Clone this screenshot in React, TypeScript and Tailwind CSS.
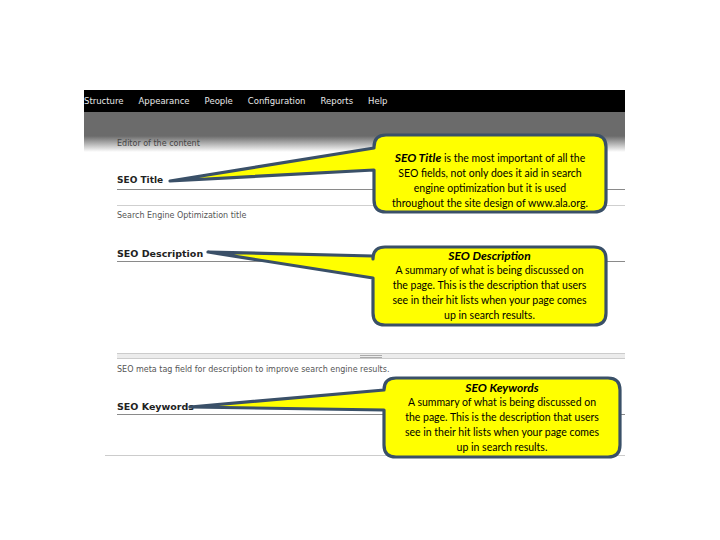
import React from "react";

type Box = { x1: number; y1: number; x2: number; y2: number; r: number; ty1: number; ty2: number; tx: number; ty: number };

const calloutPath = (b: Box) =>
    `M ${b.x1} ${b.ty2} L ${b.tx} ${b.ty} L ${b.x1} ${b.ty1} L ${b.x1} ${b.y1 + b.r} Q ${b.x1} ${b.y1} ${b.x1 + b.r} ${b.y1} ` +
    `L ${b.x2 - b.r} ${b.y1} Q ${b.x2} ${b.y1} ${b.x2} ${b.y1 + b.r} L ${b.x2} ${b.y2 - b.r} Q ${b.x2} ${b.y2} ${b.x2 - b.r} ${b.y2} ` +
    `L ${b.x1 + b.r} ${b.y2} Q ${b.x1} ${b.y2} ${b.x1} ${b.y2 - b.r} Z`;

const callouts: Box[] = [
    { x1: 374, y1: 135, x2: 606, y2: 212, r: 12, ty1: 148, ty2: 170, tx: 170, ty: 181 },
    { x1: 373, y1: 247, x2: 606, y2: 325, r: 12, ty1: 256, ty2: 278, tx: 208, ty: 252 },
    { x1: 384, y1: 378, x2: 620, y2: 457, r: 12, ty1: 390, ty2: 410, tx: 190, ty: 407 },
];

const navItems = ["Structure", "Appearance", "People", "Configuration", "Reports", "Help"];

const App: React.FC = () => {
    return (
        <div className="relative w-[720px] h-[540px] bg-white overflow-hidden">
            <div className="ml-[84px] pt-[90px] w-[541px]">
                {/* admin menu */}
                <div className="h-[22px] bg-black flex items-center gap-[15px] text-[#e8e8e8] text-[8.5px] font-['DejaVu_Sans',sans-serif]">
                    {navItems.map((n) => (
                        <span key={n}>{n}</span>
                    ))}
                </div>
                <div className="h-[40px] bg-[linear-gradient(to_bottom,#6b6b6b_0px,#6b6b6b_24px,#ffffff_40px)] pl-[33px] pt-[27px] text-[8px] leading-[10px] text-[#444] font-['DejaVu_Sans',sans-serif]">
                    Editor of the content
                </div>

                {/* form */}
                <div className="pl-[33px] font-['DejaVu_Sans',sans-serif]">
                    <div className="pt-[22px] text-[9px] leading-[12px] font-bold text-[#222]">SEO Title</div>
                    <div className="mt-[3px] border-b border-[#8a8a8a]" />
                    <div className="mt-[15px] border-b border-[#cfcfcf]" />
                    <div className="mt-[5px] text-[8px] leading-[10px] text-[#555]">Search Engine Optimization title</div>

                    <div className="mt-[27px] text-[9.5px] leading-[12px] font-semibold text-[#222]">SEO Description</div>
                    <div className="mt-[1px] border-b border-[#8a8a8a]" />
                    <div className="h-[91px]" />
                    <div className="h-[6px] bg-[#ececec] border-y border-[#cccccc] flex items-center justify-center">
                        <div className="w-[22px] h-[3px] border-y border-[#aaaaaa]" />
                    </div>
                    <div className="mt-[6px] text-[8px] leading-[10px] text-[#555]">
                        SEO meta tag field for description to improve search engine results.
                    </div>

                    <div className="mt-[26px] text-[9.5px] leading-[12px] font-bold text-[#222]">SEO Keywords</div>
                    <div className="mt-[1px] border-b border-[#8a8a8a]" />
                </div>
                <div className="mt-[40px] ml-[21px] border-b border-[#cccccc]" />
            </div>

            {/* callout shapes */}
            <svg className="absolute inset-0 pointer-events-none" width="720" height="540" viewBox="0 0 720 540">
                {callouts.map((b, i) => (
                    <path key={i} d={calloutPath(b)} fill="#ffff00" stroke="#3a5068" strokeWidth="3.2" strokeLinejoin="round" />
                ))}
            </svg>

            <div className="absolute left-[374px] top-[150px] w-[232px] text-center text-[10.5px] leading-[15px] text-black font-['Lato',sans-serif]">
                <span className="italic font-bold text-[12px]">SEO Title</span> is the most important of all the
                <br />SEO fields, not only does it aid in search
                <br />engine optimization but it is used
                <br />throughout the site design of www.ala.org.
            </div>

            <div className="absolute left-[373px] top-[248px] w-[233px] text-center text-[10.5px] leading-[15px] text-black font-['Lato',sans-serif]">
                <div className="italic font-bold text-[12px]">SEO Description</div>
                A summary of what is being discussed on
                <br />the page. This is the description that users
                <br />see in their hit lists when your page comes
                <br />up in search results.
            </div>

            <div className="absolute left-[384px] top-[380px] w-[236px] text-center text-[10.5px] leading-[15px] text-black font-['Lato',sans-serif]">
                <div className="italic font-bold text-[12px]">SEO Keywords</div>
                A summary of what is being discussed on
                <br />the page. This is the description that users
                <br />see in their hit lists when your page comes
                <br />up in search results.
            </div>
        </div>
    );
};

export default App;
